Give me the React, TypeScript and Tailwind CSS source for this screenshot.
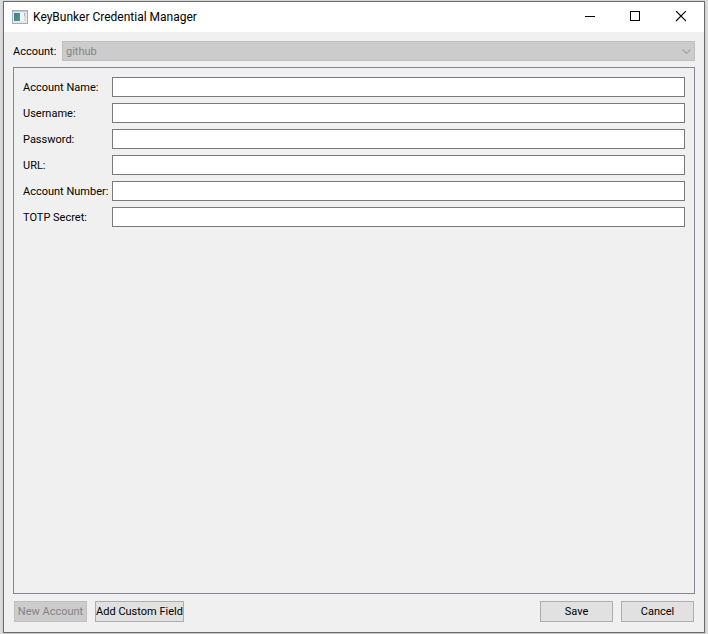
import { useState } from "react";
import type { ButtonHTMLAttributes } from "react";

const FIELDS = [
    { id: "account-name", label: "Account Name:" },
    { id: "username", label: "Username:" },
    { id: "password", label: "Password:", type: "password" },
    { id: "url", label: "URL:" },
    { id: "account-number", label: "Account Number:" },
    { id: "totp-secret", label: "TOTP Secret:" },
];

function AppIcon() {
    return (
        <svg width="16" height="14" viewBox="0 0 16 14" shapeRendering="crispEdges" aria-hidden="true">
            <defs>
                <linearGradient id="pane" x1="0" y1="0" x2="1" y2="1">
                    <stop offset="0" stopColor="#3f78b0" />
                    <stop offset="1" stopColor="#4fa468" />
                </linearGradient>
            </defs>
            <rect width="16" height="14" fill="#a9adb3" />
            <rect x="1" y="1" width="14" height="12" fill="#e6e8ea" />
            <rect x="1" y="1" width="14" height="1" fill="#c3cad2" />
            <rect x="2" y="3" width="6" height="8" fill="url(#pane)" />
            <rect x="8" y="3" width="4" height="8" fill="#f2f3f4" />
            <rect x="12" y="3" width="2" height="8" fill="#d3e0da" />
            <rect x="12" y="3" width="1" height="3" fill="#9fbccb" />
        </svg>
    );
}

function TitleBar() {
    return (
        <header className="flex h-[30px] items-center bg-white pl-2 text-[12px]">
            <AppIcon />
            <h1 className="ml-[5px] flex-1">KeyBunker Credential Manager</h1>
            <button aria-label="Minimize" className="flex h-full w-[46px] items-center justify-center">
                <svg width="10" height="10" shapeRendering="crispEdges">
                    <rect y="4" width="10" height="1" />
                </svg>
            </button>
            <button aria-label="Maximize" className="flex h-full w-11 items-center justify-center">
                <svg width="10" height="12" viewBox="0 0 10 12" shapeRendering="crispEdges">
                    <rect x="0.5" y="0.5" width="9" height="9" fill="none" stroke="black" />
                </svg>
            </button>
            <button aria-label="Close" className="flex h-full w-[47px] items-center justify-center">
                <svg width="11" height="12" viewBox="-1 0 11 12">
                    <path d="M0 0L10 10M10 0L0 10" stroke="black" strokeWidth="1.1" />
                </svg>
            </button>
        </header>
    );
}

function PushButton({ wide, ...props }: ButtonHTMLAttributes<HTMLButtonElement> & { wide?: boolean }) {
    return (
        <button
            className={`h-[21px] border border-[#adadad] bg-[#e1e1e1] leading-[19px] whitespace-nowrap disabled:border-[#bfbfbf] disabled:bg-[#cccccc] disabled:text-[#838383] ${wide ? "w-[89px]" : "w-[73px]"}`}
            {...props}
        />
    );
}

export default function App() {
    const [values, setValues] = useState<Record<string, string>>({});

    return (
        <div className="flex min-h-screen bg-[#dcdcdc] px-[3px] py-px">
            <div className="flex flex-1 flex-col border border-[#6b6b6b] bg-[#f0f0f0] font-[Roboto,sans-serif] text-[11px] text-black shadow-sm">
                <TitleBar />
                <main className="flex flex-1 flex-col px-[9px] pt-[9px] pb-[10px]">
                    {/* Account picker, locked while a new entry is being edited */}
                    <div className="flex h-5 items-center">
                        <label htmlFor="account" className="h-5 w-[49px] pt-px leading-5">Account:</label>
                        <div className="relative flex-1">
                            <select
                                id="account"
                                disabled
                                className="block h-5 w-full appearance-none border border-[#bfbfbf] bg-[#cccccc] px-[3px] pt-[2px] text-[#838383] opacity-100"
                            >
                                <option>github</option>
                            </select>
                            <svg className="pointer-events-none absolute top-2 right-1" width="9" height="6" viewBox="0 0 9 6" fill="none">
                                <path d="M0.5 0.5L4.5 4.5L8.5 0.5" stroke="#a5a5a5" strokeWidth="1.2" />
                            </svg>
                        </div>
                    </div>

                    <form className="mt-[6px] flex flex-1 flex-col gap-[6px] border border-[#828790] p-[9px]">
                        {FIELDS.map(({ id, label, type }) => (
                            <div key={id} className="flex h-5 items-center">
                                <label htmlFor={id} className="h-5 w-[89px] pt-px leading-5 whitespace-nowrap">{label}</label>
                                <input
                                    id={id}
                                    type={type ?? "text"}
                                    value={values[id] ?? ""}
                                    onChange={(e) => setValues({ ...values, [id]: e.target.value })}
                                    className="h-5 min-w-0 flex-1 border border-[#7a7a7a] bg-white px-1 outline-none focus:border-[#0078d7]"
                                />
                            </div>
                        ))}
                    </form>

                    <footer className="mt-[7px] flex gap-2 px-px">
                        <PushButton disabled>New Account</PushButton>
                        <PushButton wide>Add Custom Field</PushButton>
                        <div className="flex-1" />
                        <PushButton>Save</PushButton>
                        <PushButton>Cancel</PushButton>
                    </footer>
                </main>
            </div>
        </div>
    );
}
